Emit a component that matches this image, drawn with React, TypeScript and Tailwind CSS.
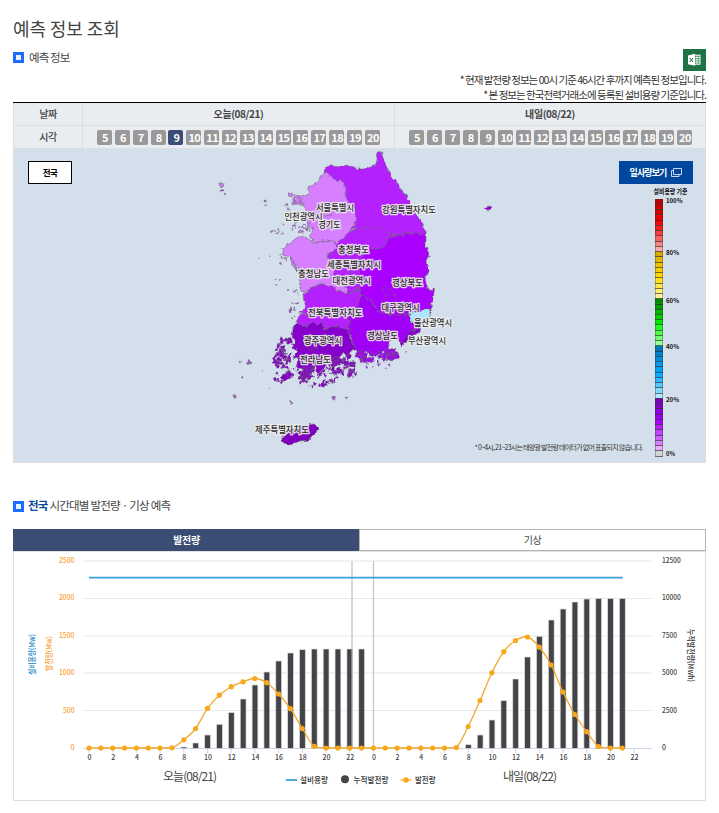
import React from 'react';

const TODAY = '오늘(08/21)';
const TOMORROW = '내일(08/22)';
const HOURS = Array.from({ length: 16 }, (_, i) => i + 5);
const KR = '"Noto Sans CJK KR", sans-serif';

function SectionMark() {
  return (
    <span className="flex h-[11px] w-[11px] items-center justify-center bg-[#1a6dff]">
      <span className="h-[5px] w-[5px] bg-[#eaf2ff]" />
    </span>
  );
}

function ExcelButton() {
  return (
    <button className="flex h-[22px] w-[23px] items-center justify-center bg-[#1f7244]">
      <svg width="15" height="14" viewBox="0 0 15 14">
        <rect x="7" y="2.2" width="6" height="9" fill="none" stroke="#fff" strokeWidth="1" />
        <path d="M7 4.5h6M7 6.8h6M7 9h6M10 2v9" stroke="#fff" strokeWidth=".9" />
        <path d="M1 2.4 8 .8v12L1 11.3z" fill="#fff" />
        <path d="m2.8 4.8 3.2 4.2M6 4.8 2.8 9" stroke="#1f7244" strokeWidth="1" />
      </svg>
    </button>
  );
}

function HourRow({ active }: { active?: number }) {
  return (
    <div className="flex w-[283px] justify-between">
      {HOURS.map((h) => (
        <span
          key={h}
          className={`flex h-[15px] w-[15px] items-center justify-center rounded-[2px] pt-px pl-px text-[11px] leading-none font-bold tracking-[-0.6px] text-white ${h === active ? 'bg-[#3b4d75]' : 'bg-[#999]'}`}
        >
          {h}
        </span>
      ))}
    </div>
  );
}

const REGIONS: { fill: string; points: string }[] = [
  { fill: '#b520ff', points: '323,172 326,168 330,166 340,167 350,166 358,169 365,169 371,167 376,164 378,153 381,152 384,161 390,173 400,188 409,200 411,208 418,217 423,224 426,236 422,235 414,233 405,234 396,235 387,233 380,227 376,227 373,230 367,226 361,229 355,228 346,234 345,190' },
  { fill: '#b520ff', points: '328,253 337,248 335,245 340,240 348,233 357,228 361,229 367,226 373,230 376,227 380,227 387,233 396,235 388,238 385,247 374,248 366,252 361,258 359,269 363,281 359,289 347,294 333,287 335,278 330,265' },
  { fill: '#d680ff', points: '326,172 333,177 337,182 341,179 342,183 347,187 345,195 350,203 356,210 355,225 348,233 340,240 335,245 327,240 315,244 310,235 313,230 307,225 308,212 301,202 301,197 308,195 308,187 317,183 323,173' },
  { fill: '#d680ff', points: '300,236 295,239 288,245 283,248 283,255 290,257 294,262 298,268 301,276 299,282 303,292 309,290 313,288 322,284 333,287 343,293 348,290 344,284 335,283 333,270 328,260 328,253 337,248 335,242 327,240 315,243 308,238' },
  { fill: '#aa00ff', points: '388,238 396,235 405,234 414,233 422,235 426,232 426,247 429,255 426,262 428,270 425,280 428,289 432,291 432,287 435,288 433,297 431,307 431,312 425,313 410,316 392,315 378,312 370,299 361,296 359,289 363,281 359,269 361,258 366,252 374,248 385,247' },
  { fill: '#b520ff', points: '303,294 309,290 322,284 333,287 347,294 359,289 361,296 358,305 349,310 349,330 340,327 330,327 324,330 322,322 317,325 313,321 307,327 296,323 299,315 307,314 299,313 306,307 304,301' },
  { fill: '#a000f6', points: '349,310 358,305 361,296 370,299 378,312 392,315 410,314 413,319 421,324 411,333 402,343 396,338 390,341 387,351 379,352 373,356 366,351 361,355 355,349 349,332' },
  { fill: '#8600cb', points: '296,323 307,327 313,321 317,325 322,322 324,330 330,327 340,327 349,330 350,338 356,349 351,353 349,358 343,352 338,358 333,360 335,366 327,360 325,367 319,373 315,365 310,374 303,381 300,376 303,369 296,367 298,359 293,358 297,352 293,348 295,340 291,335' },
  { fill: '#8600cb', points: '421,325 420,332 412,336 402,346 401,342 410,332 415,330' },
  { fill: '#aee5ff', points: '410,312 418,312 424,309 430,309 430,318 424,318 420,322 411,321 409,316' },
  { fill: '#7f00bd', points: '282,437 287,432 300,427 308,425 315,424 319,428 315,434 309,440 300,441 289,445 282,441' },
  { fill: '#d680ff', points: '295,194 299,195 301,203 297,206 294,202' },
  { fill: '#d680ff', points: '288,194 292,193 292,198' },
  { fill: '#d680ff', points: '290,258 294,261 297,271 293,266' },
  { fill: '#8600cb', points: '281,377 289,370 292,374 289,379 284,381' },
  { fill: '#a000f6', points: '388,353 395,348 398,356 392,361 386,359' },
  { fill: '#a000f6', points: '358,355 367,353 368,361 361,360' },
  { fill: '#9a00e8', points: '485,208 488,206 491,207 490,210 487,210' },
  { fill: '#d680ff', points: '219,184 224,183 223,187 220,187' },
];

const BORDERS = [
  'M319 207l6-5 5 3 3 6-4 5-7-1z',
  'M382 289l4-3 8 7 3 11-5 9-9-2-2-7 6-7z',
  'M303 339l8-4 9 4-2 9-10 2z',
  'M349 257l-4 8 6 8-1 9',
];

// [cx, cy, rx, ry, count, fill, size]
const CLUSTERS: [number, number, number, number, number, string, number][] = [
  [282, 357, 9, 11, 38, '#8600cb', 2.3],
  [286, 344, 8, 6, 16, '#8600cb', 2.2],
  [284, 371, 14, 12, 15, '#8600cb', 1.8],
  [306, 376, 10, 12, 24, '#8600cb', 2.4],
  [321, 376, 17, 10, 26, '#8600cb', 2.2],
  [342, 364, 13, 11, 38, '#8600cb', 2.7],
  [353, 370, 7, 8, 12, '#8600cb', 1.8],
  [366, 356, 10, 6, 22, '#a000f6', 2.4],
  [388, 355, 10, 7, 28, '#a000f6', 2.5],
  [378, 366, 14, 5, 7, '#a000f6', 1.4],
  [295, 204, 10, 8, 10, '#c878ee', 1.5],
  [300, 227, 12, 6, 16, '#b55fda', 1.4],
  [280, 231, 9, 6, 6, '#c890e2', 1.1],
  [285, 258, 7, 7, 6, '#b55fda', 1.1],
  [296, 297, 6, 7, 6, '#b55fda', 1.1],
  [290, 315, 5, 14, 6, '#a23bd0', 1.2],
];

const STRAYS: [number, number, number][] = [
  [222, 191, 1.2], [225, 194, 0.8], [265, 201, 1.1], [266, 205, 0.7], [276, 279, 1], [280, 280, 0.8],
  [276, 285, 0.7], [259, 258, 0.5], [269, 256, 0.5], [288, 291, 0.7], [250, 362, 2], [240, 361, 0.9],
  [243, 377, 1], [235, 396, 1.2], [290, 402, 1.3], [334, 398, 1.8], [347, 398, 0.9], [262, 371, 0.5],
  [277, 233, 1], [283, 224, 1.1], [406, 352, 0.6], [270, 388, 0.7],
];

function scatter() {
  let seed = 11;
  const rnd = () => {
    seed = (seed * 16807) % 2147483647;
    return seed / 2147483647;
  };
  return CLUSTERS.flatMap(([cx, cy, rx, ry, n, fill, size]) =>
    Array.from({ length: n }, () => {
      const a = rnd() * Math.PI * 2;
      const r = Math.sqrt(rnd());
      const x = cx + Math.cos(a) * r * rx;
      const y = cy + Math.sin(a) * r * ry;
      const s = size * (0.4 + rnd() * 0.7);
      const points = [0, 1, 2, 3, 4]
        .map((k) => {
          const t = k * 1.257 + rnd();
          const d = s * (0.6 + rnd() * 0.7);
          return `${(x + Math.cos(t) * d).toFixed(1)},${(y + Math.sin(t) * d).toFixed(1)}`;
        })
        .join(' ');
      return { fill, points };
    }),
  );
}
const ISLETS = scatter();

// [name, left, centre y, width]
const LABELS: [string, number, number, number][] = [
  ['서울특별시', 316, 208, 38], ['인천광역시', 284.5, 216.5, 38], ['경기도', 318.5, 224.5, 22],
  ['강원특별자치도', 382, 210, 54], ['충청북도', 338, 249.5, 31], ['세종특별자치시', 327, 264.5, 54],
  ['충청남도', 298, 273.5, 31], ['대전광역시', 332.5, 281, 38.5], ['경상북도', 392, 283, 31],
  ['대구광역시', 381.5, 307.5, 38], ['전북특별자치도', 308, 312.5, 54.5], ['울산광역시', 414, 323, 38],
  ['경상남도', 367, 335.5, 31], ['부산광역시', 408, 341, 38], ['광주광역시', 304, 341, 38],
  ['전라남도', 300, 360, 31], ['제주특별자치도', 255, 429.5, 54],
];

const SCALE = [
  '#b90000', '#c90000', '#d90000', '#e60000', '#ee0a0a', '#f32020', '#f54040', '#f76060', '#f98484', '#fba8a8',
  '#d2aa00', '#dfb600', '#edc200', '#f9ca00', '#ffd500', '#ffde20', '#ffe84a', '#ffec70', '#fff19a',
  '#008a00', '#009e00', '#00b800', '#00cf00', '#00e600', '#20fa20', '#48ff48', '#70ff70', '#98ff98',
  '#0077b5', '#0082c6', '#008ed8', '#0099ec', '#00a2f8', '#0eacff', '#2fb9ff', '#58c8ff', '#86d8ff', '#b0e8ff',
  '#7a00b8', '#8400c8', '#9200df', '#a000f2', '#aa00ff', '#b520ff', '#c045ff', '#cb62ff', '#d680ff', '#e6acff',
  '#d4d4d4',
];
const SCALE_LABELS: [string, number, number][] = [
  ['100%', 203, 16.5], ['80%', 255, 13], ['60%', 303, 13], ['40%', 349.3, 13], ['20%', 402, 13], ['0%', 456.3, 9],
];

function ForecastMap() {
  return (
    <svg className="block" width="692" height="313" viewBox="14 149 692 313" fontFamily={KR}>
      <defs>
        <filter id="coast" x="-5%" y="-5%" width="110%" height="110%" colorInterpolationFilters="sRGB">
          <feTurbulence type="fractalNoise" baseFrequency="0.2" numOctaves="2" seed="4" result="n" />
          <feDisplacementMap in="SourceGraphic" in2="n" scale="5" xChannelSelector="R" yChannelSelector="G" />
          <feGaussianBlur stdDeviation="0.35" />
        </filter>
      </defs>
      <g filter="url(#coast)" stroke="#6a6474" strokeOpacity=".7" strokeWidth=".9" strokeLinejoin="round">
        {REGIONS.map((r, i) => (
          <polygon key={i} points={r.points} fill={r.fill} />
        ))}
        <path d="M337 283l6 1 5 5-1 5-6-2-5-4z" fill="#d680ff" />
        {BORDERS.map((d) => (
          <path key={d} d={d} fill="none" />
        ))}
        {ISLETS.map((r, i) => (
          <polygon key={i} points={r.points} fill={r.fill} strokeWidth=".6" />
        ))}
        {STRAYS.map(([x, y, r]) => (
          <circle key={`${x}-${y}`} cx={x} cy={y} r={r} fill="#9e4cc4" strokeWidth=".6" />
        ))}
      </g>
      <g fontSize="8.6" fontWeight="500" fill="#2c2c2c" stroke="#eee" strokeOpacity=".88" strokeWidth="2.6" strokeLinejoin="round" paintOrder="stroke">
        {LABELS.map(([name, x, y, w]) => (
          <text key={name} x={x} y={y + 3.2} textLength={w} lengthAdjust="spacingAndGlyphs">
            {name}
          </text>
        ))}
      </g>
      <text x="653.5" y="194.3" fontSize="6.5" fontWeight="700" fill="#111" textLength="34" lengthAdjust="spacingAndGlyphs">
        설비용량 기준
      </text>
      {SCALE.map((c, i) => (
        <rect key={c} x="655" y={199 + i * 5.245} width="8" height="5.245" fill={c} />
      ))}
      {SCALE.map((c, i) => (
        <rect key={c} x="655" y={Math.round(198.6 + (i + 1) * 5.245)} width="8" height="1" fill="#222" fillOpacity=".62" />
      ))}
      <path d="M655.5 199v257M662.5 199v257M655 199.5h8" stroke="#333" strokeOpacity=".35" fill="none" />
      {SCALE_LABELS.map(([t, y, w]) => (
        <text key={t} x="666" y={y} fontSize="6.5" fontWeight="700" fill="#111" textLength={w} lengthAdjust="spacingAndGlyphs">
          {t}
        </text>
      ))}
      <text x="474.5" y="450" fontSize="7" fill="#333" textLength="169" lengthAdjust="spacing">
        * 0~4시, 21~23시는 태양광 발전량 데이터가 없어 표출되지 않습니다.
      </text>
    </svg>
  );
}

const BASE = 748;
const px = (i: number) => 89 + i * 11.85;
const POWER_Y = [
  748, 748, 748, 748, 748, 748, 748, 747.8, 739.8, 728.5, 708.3, 695.2, 686.7, 681.8, 678.5, 682.7, 694, 708.7, 728.5,
  746.3, 748, 748, 748, 748, 748, 748, 748, 748, 748, 748, 748, 747.5, 726.5, 700.5, 672.8, 651.7, 640.5, 637, 647, 665,
  692, 714.5, 731.7, 746.5, 748, 748,
];
const TOTAL_Y: [number, number][] = [
  [8, 747], [9, 743], [10, 735], [11, 724.3], [12, 712.5], [13, 699], [14, 685], [15, 672], [16, 661], [17, 653],
  [18, 649.7], [19, 649], [20, 649], [21, 649], [22, 649], [23, 649], [32, 744.7], [33, 735], [34, 720], [35, 700.7],
  [36, 679], [37, 657], [38, 636.3], [39, 620], [40, 609], [41, 602], [42, 599], [43, 598.4], [44, 598.4], [45, 598.4],
];

function spline(ys: number[]) {
  const clamp = (y: number) => Math.min(BASE, y);
  let d = `M${px(0)} ${ys[0]}`;
  for (let i = 0; i < ys.length - 1; i++) {
    const a = ys[Math.max(0, i - 1)];
    const b = ys[i];
    const c = ys[i + 1];
    const e = ys[Math.min(ys.length - 1, i + 2)];
    d += ` C${px(i + 1 / 3)} ${clamp(b + (c - a) / 6)} ${px(i + 2 / 3)} ${clamp(c - (e - b) / 6)} ${px(i + 1)} ${c}`;
  }
  return d;
}

function PowerChart() {
  const gridY = [561, 598.5, 636, 673, 710.5];
  return (
    <svg className="block" width="691" height="248" viewBox="14 552 691 248" fontFamily={KR}>
      {gridY.map((y) => (
        <path key={y} d={`M83 ${y}H652`} stroke="#e8e8e8" strokeWidth="1.2" />
      ))}
      <path d="M83 748.5H652" stroke="#ccd6eb" />
      {Array.from({ length: 24 }, (_, k) => (
        <path key={k} d={`M${px(k * 2)} 749v4`} stroke="#ccd6eb" strokeWidth="1" />
      ))}
      {TOTAL_Y.map(([i, y]) => (
        <rect key={i} x={px(i) - 2.8} y={y} width="5.8" height={BASE - y + 0.5} fill="#434348" stroke="#ddd" strokeWidth=".7" />
      ))}
      <path d="M352 561V748M373.5 561V748" stroke="#b8b8b8" strokeOpacity=".8" strokeWidth="1.3" />
      <path d={`M${px(0)} 577.7H${px(45) + 0.5}`} stroke="#3a9fd6" strokeWidth="1.7" />
      <path d={spline(POWER_Y)} fill="none" stroke="#f0a92e" strokeWidth="1.3" />
      {POWER_Y.map((y, i) => (
        <circle key={i} cx={px(i)} cy={y} r="2.6" fill="#f9a61a" />
      ))}
      <g fontSize="7" fontWeight="500" fill="#f9a13a" textAnchor="end">
        {[2500, 2000, 1500, 1000, 500, 0].map((v, i) => (
          <text key={v} x="74.5" y={563 + i * 37.4} textLength={v >= 1000 ? 15.5 : v ? 11.5 : 4} lengthAdjust="spacingAndGlyphs">
            {v}
          </text>
        ))}
      </g>
      <g fontSize="7" fontWeight="500" fill="#444">
        {[12500, 10000, 7500, 5000, 2500, 0].map((v, i) => (
          <text key={v} x="662" y={563 + i * 37.4} textLength={v >= 10000 ? 18.8 : v ? 15 : 4} lengthAdjust="spacingAndGlyphs">
            {v}
          </text>
        ))}
      </g>
      <g fontSize="7" fontWeight="500" fill="#444" textAnchor="middle">
        {Array.from({ length: 24 }, (_, k) => (
          <text key={k} x={px(k * 2) + 0.5} y="760">
            {(k * 2) % 24}
          </text>
        ))}
      </g>
      <text transform="translate(35 675) rotate(-90)" fontSize="8" fontWeight="500" fill="#1689c9" textLength="41" lengthAdjust="spacingAndGlyphs">
        설비용량(Mw)
      </text>
      <text transform="translate(52 671) rotate(-90)" fontSize="8" fontWeight="500" fill="#f9a13a" textLength="35" lengthAdjust="spacingAndGlyphs">
        발전량(Mw)
      </text>
      <text transform="translate(687.5 629) rotate(90)" fontSize="8" fontWeight="500" fill="#333" textLength="53" lengthAdjust="spacingAndGlyphs">
        누적발전량(Mwh)
      </text>
      <g fontSize="12" fill="#444">
        <text x="163" y="781" textLength="54" lengthAdjust="spacing">{TODAY}</text>
        <text x="503" y="781" textLength="54" lengthAdjust="spacing">{TOMORROW}</text>
      </g>
      <path d="M286 780h11" stroke="#4fabdb" strokeWidth="2" />
      <circle cx="345" cy="779.3" r="4" fill="#434348" />
      <path d="M400.5 780h11" stroke="#f9a61a" strokeWidth="1.3" />
      <circle cx="406" cy="780" r="2.7" fill="#f9a61a" />
      <g fontSize="8" fontWeight="500" fill="#333">
        <text x="300" y="783" textLength="28" lengthAdjust="spacingAndGlyphs">설비용량</text>
        <text x="353.5" y="783" textLength="35" lengthAdjust="spacingAndGlyphs">누적발전량</text>
        <text x="415" y="783" textLength="20.5" lengthAdjust="spacingAndGlyphs">발전량</text>
      </g>
    </svg>
  );
}

export default function App() {
  return (
    <main className="h-[813px] w-[719px] overflow-hidden bg-white pl-[13px] font-['Noto_Sans_CJK_KR',sans-serif] text-[#444]">
      <div className="w-[693px]">
        <h1 className="pt-[15px] text-[18px] leading-[27px] tracking-[-0.1px] whitespace-nowrap">예측 정보 조회</h1>
        <div className="flex h-[29px] justify-between pt-[7px]">
          <h2 className="flex h-[16px] items-center gap-[5px] text-[11.5px] leading-4 tracking-[-0.9px]">
            <SectionMark />
            <span className="-mt-px">예측 정보</span>
          </h2>
          <ExcelButton />
        </div>
        <div className="flex h-[31px] flex-col items-end pt-px text-[10.5px] leading-[15px] tracking-[-0.97px] whitespace-nowrap text-[#333]">
          <p>* 현재 발전량 정보는 00시 기준 46시간 후까지 예측된 정보입니다.</p>
          <p>* 본 정보는 한국전력거래소에 등록된 설비용량 기준입니다.</p>
        </div>

        <section className="border border-t-0 border-[#ddd]">
          <div className="-mx-px h-px bg-black" />
          <div className="grid h-[46px] grid-cols-[69px_312px_1fr] grid-rows-2 bg-[#e9ecf1] text-[10px] leading-none font-medium tracking-[-0.5px]">
            <div className="flex items-center justify-center border-r border-b border-[#ddd]">날짜</div>
            <div className="flex items-center justify-center border-r border-b border-[#ddd] font-bold tracking-[-0.4px]">{TODAY}</div>
            <div className="flex items-center justify-center border-b border-[#ddd] font-bold tracking-[-0.4px]">{TOMORROW}</div>
            <div className="flex items-center justify-center border-r border-b border-[#ddd]">시각</div>
            <div className="flex items-center border-r border-b border-[#ddd] pl-[14px]">
              <HourRow active={9} />
            </div>
            <div className="flex items-center border-b border-[#ddd] pl-[14px]">
              <HourRow />
            </div>
          </div>
          <div className="relative h-[313px] bg-[#d3dfea]">
            <ForecastMap />
            <button className="absolute top-[12px] left-[14px] h-[23px] w-[44px] border border-black bg-white text-[8.5px] leading-none font-bold tracking-[-0.5px] text-black">
              전국
            </button>
            <button className="absolute top-[12px] left-[605px] flex h-[23px] w-[74px] items-center justify-center gap-[5px] bg-[#00479d] pb-px text-[9px] leading-none font-bold tracking-[-0.9px] whitespace-nowrap text-white">
              일사량보기
              <svg width="11" height="9" viewBox="0 0 11 9" fill="none" stroke="#dce8f8" strokeWidth=".9">
                <path d="M2.5.5h8v6h-8zM2.5 2.5h-2v6H8v-2" />
              </svg>
            </button>
          </div>
        </section>

        <h2 className="mt-[34px] flex h-[18px] items-center gap-[4px] text-[11.5px] leading-4 tracking-[-0.77px] whitespace-nowrap">
          <SectionMark />
          <span className="-mt-[2px]">
            <b className="text-[#0a4a9b]">전국</b> 시간대별 발전량 · 기상 예측
          </span>
        </h2>

        <div className="mt-[14px] flex h-[22px] text-[10px] leading-none tracking-[-0.4px]">
          <button className="flex w-[346px] items-center justify-center bg-[#3b4d75] pl-px font-bold text-white">발전량</button>
          <button className="flex flex-1 items-center justify-center border border-[#b5b5b5]">기상</button>
        </div>
        <div className="border border-t-[#e2e2e2] border-[#ddd]">
          <PowerChart />
        </div>
      </div>
    </main>
  );
}
